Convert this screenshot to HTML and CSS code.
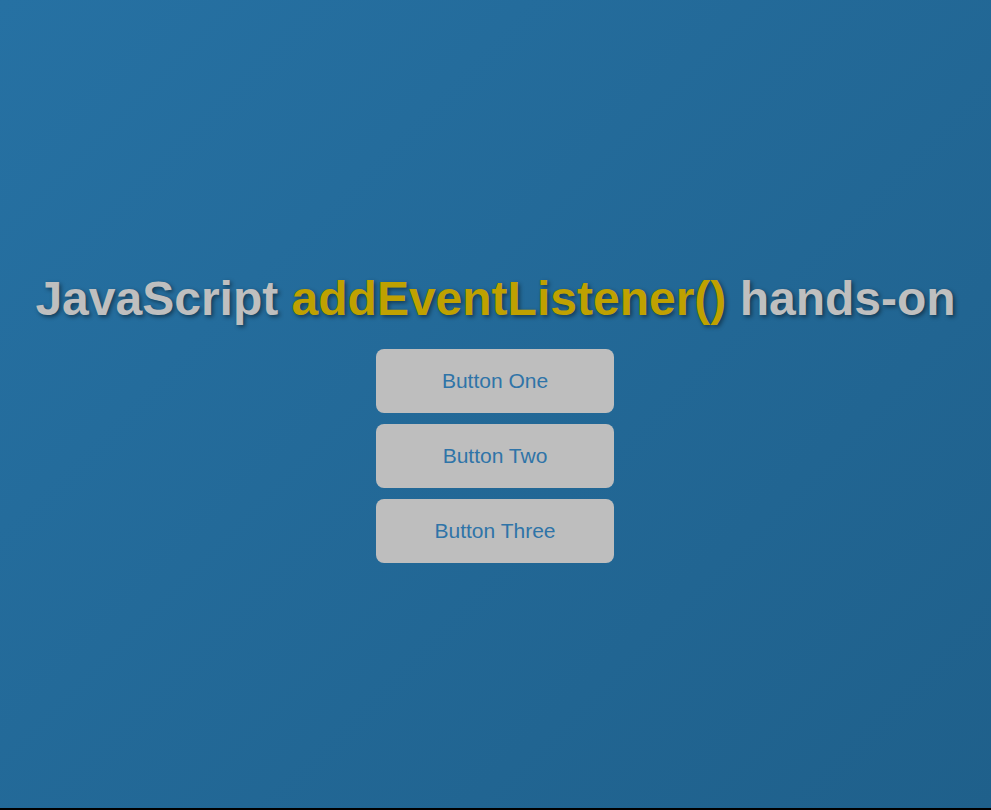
FILE: index.html
```html
<!DOCTYPE html>
<html>
<head>
<meta charset="utf-8">
<link rel="stylesheet" href="styles.css">
</head>
<body>
<main class="page">
  <h1 class="title">JavaScript <span class="accent">addEventListener()</span> hands-on</h1>
  <div class="buttons">
    <button class="btn">Button One</button>
    <button class="btn">Button Two</button>
    <button class="btn">Button Three</button>
  </div>
</main>
</body>
</html>
```
FILE: styles.css
```css
html { background: #000; }
body {
  margin: 0;
  font-family: "Liberation Sans", Arial, sans-serif;
}
.page {
  height: 808px;
  background: linear-gradient(135deg, #2671a3 0%, #1f608b 100%);
  display: flex;
  flex-direction: column;
  align-items: center;
  justify-content: center;
  box-sizing: border-box;
  padding-top: 25px;
}
.title {
  margin: 0 0 22px;
  font-size: 48px;
  font-weight: bold;
  color: #bfbfbf;
  text-shadow: 2px 2px 4px rgba(0,0,0,0.45);
  line-height: 1.2;
}
.accent { color: #bfa100; }
.buttons {
  display: flex;
  flex-direction: column;
  gap: 11px;
  margin-right: 1px;
}
.btn {
  width: 238px;
  height: 64px;
  border: none;
  border-radius: 8px;
  background: #bebebe;
  color: #2f74a8;
  font-family: "Liberation Sans", Arial, sans-serif;
  font-size: 21px;
  padding: 0;
}
```
